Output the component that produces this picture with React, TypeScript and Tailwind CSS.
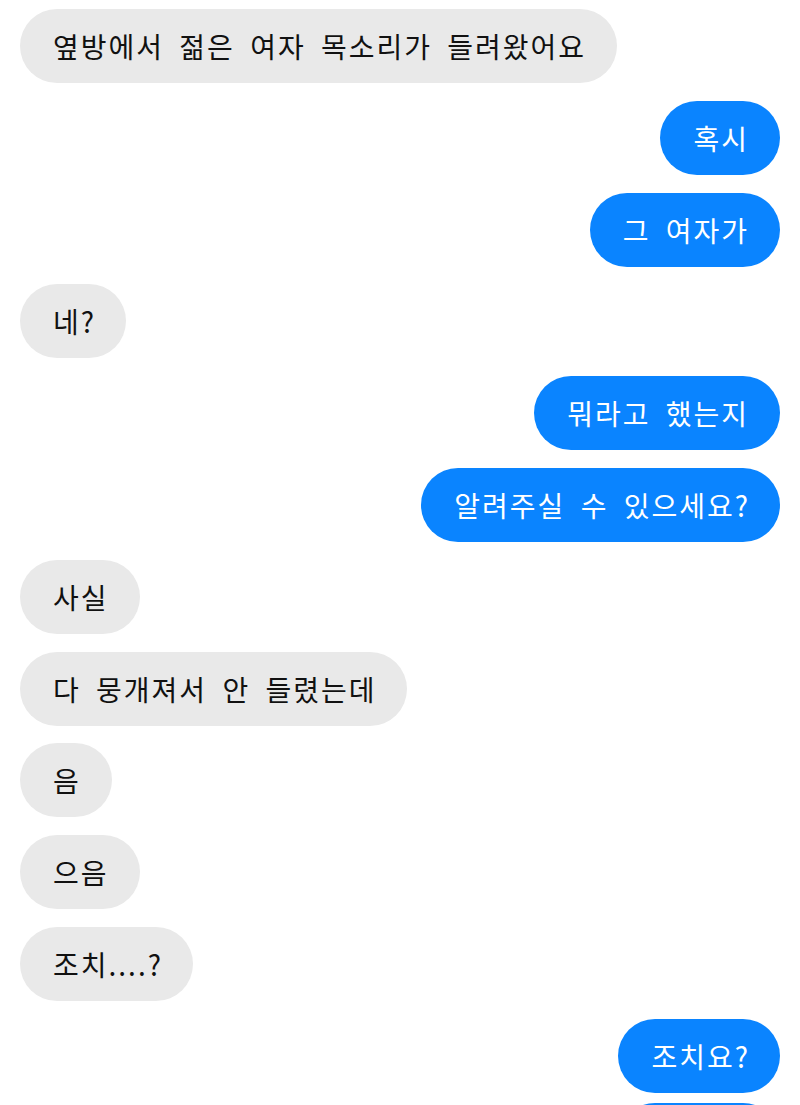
import React from "react";

type Msg = { text: string; me: boolean };

const msgs: Msg[] = [
  { text: "옆방에서 젊은 여자 목소리가 들려왔어요", me: false },
  { text: "혹시", me: true },
  { text: "그 여자가", me: true },
  { text: "네?", me: false },
  { text: "뭐라고 했는지", me: true },
  { text: "알려주실 수 있으세요?", me: true },
  { text: "사실", me: false },
  { text: "다 뭉개져서 안 들렸는데", me: false },
  { text: "음", me: false },
  { text: "으음", me: false },
  { text: "조치....?", me: false },
  { text: "조치요?", me: true },
];

function Segments({ text }: { text: string }) {
  const parts = text.match(/[\uAC00-\uD7A3]+|\.+|[^\uAC00-\uD7A3.]+/g) || [];
  return (
    <>
      {parts.map((p, i) => {
        if (/^[\uAC00-\uD7A3]+$/.test(p)) {
          return (
            <span key={i} className="tracking-[2px]">
              {p}
            </span>
          );
        }
        if (/^\.+$/.test(p)) {
          return (
            <span key={i} className="tracking-[2px]">
              {p}
            </span>
          );
        }
        return (
          <span key={i} className="tracking-[1px]">
            {p}
          </span>
        );
      })}
    </>
  );
}

export default function App() {
  return (
    <div
      className="w-[800px] h-[1105px] overflow-hidden bg-white px-[20px] pt-[9px] flex flex-col gap-[17.8px]"
      style={{ fontFamily: '"Noto Sans CJK KR", sans-serif' }}
    >
      {msgs.map((m, i) => (
        <div key={i} className={`flex ${m.me ? "justify-end" : "justify-start"}`}>
          <div
            className={`h-[74px] shrink-0 rounded-full pl-[33px] pr-[31px] flex items-center text-[28px] leading-none whitespace-nowrap [word-spacing:8px] ${
              m.me ? "bg-[#0a84ff] text-white" : "bg-[#e9e9e9] text-[#111111]"
            }`}
          >
            <span>
              <Segments text={m.text} />
            </span>
          </div>
        </div>
      ))}
      <div className="flex justify-end -mt-[8px]">
        <div className="h-[74px] w-[162px] shrink-0 rounded-full bg-[#0a84ff]" />
      </div>
    </div>
  );
}
